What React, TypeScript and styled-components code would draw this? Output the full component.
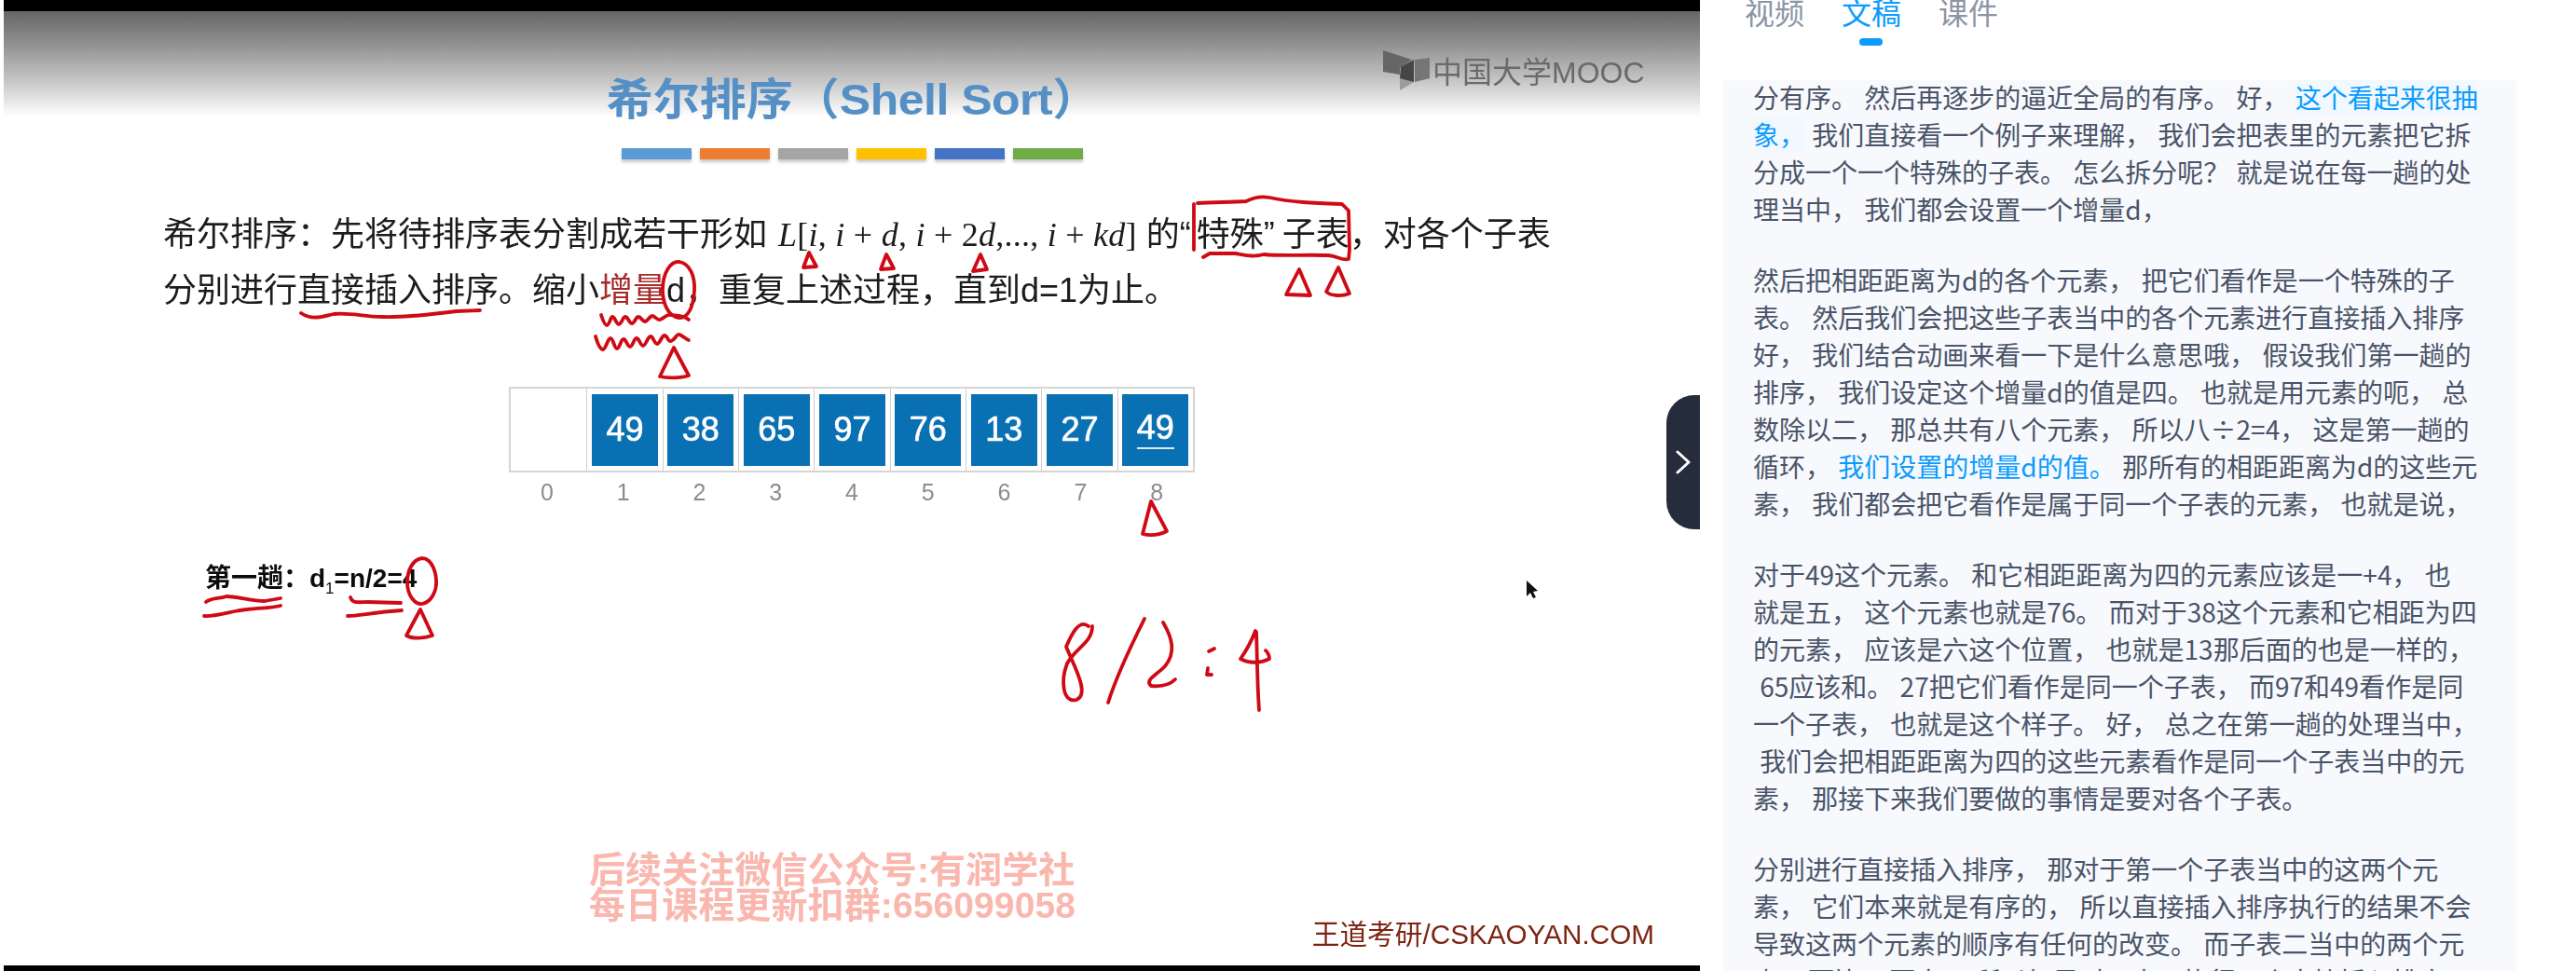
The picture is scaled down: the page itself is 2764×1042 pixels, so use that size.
import React from "react";
import styled, { createGlobalStyle } from "styled-components";

const GlobalStyle = createGlobalStyle`
  html, body { margin: 0; padding: 0; background: #ffffff; }
  body { font-family: "Noto Sans CJK SC", "Liberation Sans", sans-serif; overflow: hidden; }
`;

const Page = styled.div`
  display: flex;
  width: 2764px;
  height: 1042px;
  overflow: hidden;
  background: #fff;
`;

const Player = styled.section`
  position: relative;
  flex: 0 0 1820px;
  margin-left: 4px;
  height: 1042px;
  display: flex;
  flex-direction: column;
  background: #000;
  padding: 12px 0 6px;
  box-sizing: border-box;
`;

const Slide = styled.div`
  position: relative;
  flex: 1;
  display: flex;
  flex-direction: column;
  overflow: hidden;
  background: #fff;
  color: #111;
  font-family: "Liberation Sans", "Noto Sans CJK SC", sans-serif;
`;

const Blurred = styled.div`
  display: flex;
  flex-direction: column;
  flex: 1;
  filter: blur(0.6px);
`;

const SlideHead = styled.header`
  display: flex;
  flex-direction: column;
  align-items: center;
  height: 113px;
  background: linear-gradient(180deg, #666666 0%, #8f8f8f 30%, #c4c4c4 65%, #ffffff 100%);
  position: relative;
`;

const SlideTitle = styled.h1`
  margin: 60px 0 0 2px;
  font-size: 50px;
  line-height: 70px;
  font-weight: 700;
  color: #5490c6;
  white-space: nowrap;
  transform: scaleY(0.94);
`;

const TitleLatin = styled.span`
  letter-spacing: -0.5px;
`;

const MoocLogo = styled.div`
  position: absolute;
  left: 1480px;
  top: 40px;
  display: flex;
  align-items: center;
  gap: 1px;
  font-size: 32px;
  color: #6a6a6a;
  white-space: nowrap;
`;

const ColorBars = styled.div`
  display: flex;
  justify-content: center;
  gap: 9px;
  margin-top: 34px;
`;

const ColorBar = styled.span<{ $c: string }>`
  width: 75px;
  height: 12px;
  background: ${(p) => p.$c};
  box-shadow: 0 3px 3px rgba(0, 0, 0, 0.22);
`;

const Definition = styled.div`
  margin: 51px 0 0 171px;
  font-size: 36px;
  line-height: 60px;
  color: #1c1c1c;
  font-family: "Liberation Sans", "Noto Sans CJK SC", sans-serif;
`;

const DefLine = styled.div`
  white-space: nowrap;
`;

const MathText = styled.span`
  font-family: "Liberation Serif", serif;
  font-size: 36px;
  margin: 0 10px 0 12px;
  letter-spacing: 0.25px;
`;

const MathVar = styled.i`
  font-style: italic;
`;

const RedText = styled.span`
  color: #a82a2a;
`;

const Quote = styled.span<{ $gap: number }>`
  margin-right: ${(p) => p.$gap}px;
`;

const ArrayWrap = styled.div`
  margin: 73px 0 0 542px;
  width: 736px;
`;

const ArrayRow = styled.div`
  display: grid;
  grid-template-columns: repeat(9, 1fr);
  height: 92px;
  box-sizing: border-box;
  border: 2px solid #d5d5d5;
`;

const Cell = styled.div`
  display: flex;
  align-items: center;
  justify-content: center;
  border-left: 1px solid #cfcfcf;
  &:first-child { border-left: none; }
`;

const Tile = styled.div<{ $under?: boolean }>`
  width: 71px;
  height: 77px;
  display: flex;
  align-items: center;
  justify-content: center;
  background: #0a70b4;
  color: #fff;
  font-size: 36px;
  font-weight: 400;
  -webkit-text-stroke: 0.7px #fff;
  span {
    ${(p) => (p.$under ? "border-bottom: 2px solid #dfeaf3; padding-bottom: 3px; line-height: 36px;" : "")}
  }
`;

const IndexRow = styled.div`
  display: grid;
  grid-template-columns: repeat(9, 1fr);
  margin-top: 6px;
`;

const IndexLabel = styled.span`
  text-align: center;
  font-size: 25px;
  line-height: 30px;
  color: #8c8c8c;
`;

const PassLabel = styled.div`
  margin: 61px 0 0 216px;
  font-size: 28px;
  line-height: 34px;
  font-weight: 700;
  color: #0c0c0c;
  white-space: nowrap;
  sub { font-size: 17px; line-height: 0; font-weight: 400; }
`;

const Foot = styled.footer`
  margin-top: auto;
  display: flex;
  align-items: flex-end;
  padding: 0 49px 15px 628px;
  justify-content: space-between;
`;

const Watermark = styled.div`
  font-size: 39px;
  line-height: 38px;
  font-weight: 700;
  color: #fab7ae;
  white-space: nowrap;
  letter-spacing: 0.1px;
  margin-bottom: 30px;
`;

const Brand = styled.div`
  font-size: 29.7px;
  line-height: 36px;
  color: #7e2412;
  white-space: nowrap;
`;

const InkLayer = styled.svg`
  position: absolute;
  left: -4px;
  top: -12px;
  width: 1828px;
  height: 1042px;
  pointer-events: none;
  filter: blur(0.4px);
`;

const CollapseHandle = styled.button`
  position: absolute;
  right: 0;
  top: 424px;
  width: 36px;
  height: 144px;
  padding: 0;
  border: none;
  border-radius: 30px 0 0 30px;
  background: #252c3b;
  display: flex;
  align-items: center;
  justify-content: center;
`;

const Side = styled.aside`
  flex: 0 0 940px;
  display: flex;
  flex-direction: column;
  height: 1042px;
  overflow: hidden;
`;

const Tabs = styled.nav`
  display: flex;
  gap: 40px;
  height: 86px;
  padding-left: 48px;
  box-sizing: border-box;
  overflow: hidden;
  flex: none;
`;

const Tab = styled.div<{ $active?: boolean }>`
  position: relative;
  margin-top: -11px;
  font-size: 32px;
  line-height: 46px;
  height: 60px;
  color: ${(p) => (p.$active ? "#0a9bff" : "#8b95a6")};
  &::after {
    content: "";
    display: ${(p) => (p.$active ? "block" : "none")};
    position: absolute;
    left: 19px;
    top: 52px;
    width: 25px;
    height: 8px;
    border-radius: 4px;
    background: #0a9bff;
  }
`;

const Transcript = styled.div`
  margin-left: 24px;
  width: 852px;
  flex: 1;
  box-sizing: border-box;
  padding: 0 0 0 33px;
  background: #f7f9fd;
  overflow: hidden;
  color: #4a5468;
  font-size: 28px;
  line-height: 40px;
  word-spacing: 1px;
  font-family: "Noto Sans CJK SC", "Liberation Sans", sans-serif;
`;

const Para = styled.p`
  margin: 0 0 36px;
  &:first-child { margin-top: -2px; }
`;

const TLine = styled.div`
  white-space: pre;
`;

const Hl = styled.span<{ $tint?: boolean }>`
  color: #0a9bff;
  background: ${(p) => (p.$tint ? "#f1f8ff" : "transparent")};
`;

const bars = ["#5b9bd5", "#ed7d31", "#a5a5a5", "#ffc000", "#4472c4", "#70ad47"];
const values = ["", "49", "38", "65", "97", "76", "13", "27", "49"];

const Ink = styled.path`
  fill: none;
  stroke: #cf0a14;
  stroke-width: 3.8;
  stroke-linecap: round;
  stroke-linejoin: round;
`;

const inkPaths = [
  "M868 271 L862 287 L876 286 Z",
  "M951 273 L945 289 L959 288 Z",
  "M1052 273 L1044 291 L1059 289 Z",
  "M323 336 C335 344 345 340 358 337 C375 335 390 340 410 340 C440 341 470 336 490 334 L515 333",
  "M711 311 C711 292 720 280 729 281 C740 283 746 296 745 312 C744 330 738 342 728 341 C717 339 711 326 711 311",
  "M645 338 C647 344 649 349 651 349 C654 349 655 340 657 340 C660 340 661 348 664 348 C667 348 668 340 671 340 C674 340 675 347 678 347 C681 347 682 340 685 340 C688 340 689 345 692 345 C695 345 697 339 700 339 C703 339 705 344 708 343 C712 342 715 337 719 338 C723 339 732 337 739 343",
  "M639 361 C641 368 644 375 647 375 C650 375 652 363 655 363 C658 363 659 374 662 374 C665 374 666 364 669 364 C672 364 673 372 676 372 C679 372 680 363 683 363 C686 363 687 371 690 371 C693 371 695 361 698 361 C701 361 702 369 705 369 C708 369 710 360 713 360 C716 360 717 367 720 366 C724 365 726 358 729 359 C732 360 736 364 739 365",
  "M723 373 L708 404 C716 406 730 406 739 403 Z",
  "M1281 219 L1281 268",
  "M1285 218 C1300 217 1320 217 1337 216 C1345 212 1352 210 1362 212 C1385 217 1410 218 1440 219 L1447 226 L1448 268 L1447 278 C1440 280 1436 275 1425 274 C1400 273 1375 275 1356 273 C1345 276 1338 274 1325 272 L1298 272 L1291 276",
  "M1394 289 L1380 316 L1406 317 Z",
  "M1436 287 L1423 313 C1428 318 1440 318 1448 315 Z",
  "M1235 538 L1226 573 C1234 575 1244 574 1252 570 Z",
  "M453 599 C443 600 437 612 437 625 C437 640 446 649 453 648 C463 646 469 634 468 622 C467 609 461 599 453 599",
  "M451 654 L436 682 C443 686 455 685 464 682 Z",
  "M221 646 C228 641 234 643 243 640 C255 640 270 645 284 645 L301 642",
  "M219 661 C232 662 250 655 265 654 C278 652 290 653 301 650",
  "M376 641 C378 648 385 646 395 646 L430 647",
  "M373 661 C385 661 400 657 431 655",
  "M1168 672 C1158 664 1150 680 1144 694 C1152 714 1170 745 1155 751 C1140 755 1138 730 1145 712 C1154 695 1172 690 1172 672",
  "M1228 664 C1215 690 1198 725 1189 754",
  "M1248 668 C1258 685 1262 700 1250 715 C1240 725 1228 730 1235 736 C1245 737 1255 735 1261 729",
  "M1303 696 L1297 699 M1296 717 L1295 724 L1300 724",
  "M1347 677 C1342 690 1336 700 1331 707 C1340 712 1352 712 1362 707 C1362 702 1360 700 1358 698 M1348 678 C1349 705 1349 735 1351 762",
];

export default function App() {
  return (
    <Page>
      <GlobalStyle />
      <Player>
        <Slide>
          <Blurred>
            <SlideHead>
              <SlideTitle>希尔排序（<TitleLatin>Shell Sort</TitleLatin>）</SlideTitle>
              <MoocLogo>
                <svg width="52" height="46" viewBox="9 5 52 46" aria-hidden="true">
                  <path d="M9 7 L40 17 L27 26 L27 33 L9 30 Z" fill="#666666" />
                  <path d="M27 33 L42 41 L27 50 Z" fill="#9c9c9c" />
                  <path d="M42 17 L28 25 L27 37 L42 41 Z" fill="#464646" />
                  <path d="M43 17 L59 15 L59 37 L43 41 Z" fill="#767676" />
                </svg>
                <span>中国大学MOOC</span>
              </MoocLogo>
            </SlideHead>
            <ColorBars>
              {bars.map((c) => (
                <ColorBar key={c} $c={c} />
              ))}
            </ColorBars>
            <Definition>
              <DefLine>
                希尔排序：先将待排序表分割成若干形如
                <MathText>
                  <MathVar>L</MathVar>[<MathVar>i</MathVar>, <MathVar>i</MathVar> + <MathVar>d</MathVar>, <MathVar>i</MathVar> + 2<MathVar>d</MathVar>,..., <MathVar>i</MathVar> + <MathVar>kd</MathVar>]
                </MathText>
                的<Quote $gap={6}>“</Quote>特殊<Quote $gap={8}>”</Quote>子表，对各个子表
              </DefLine>
              <DefLine>
                分别进行直接插入排序。缩小<RedText>增量</RedText>d，重复上述过程，直到d=1为止。
              </DefLine>
            </Definition>
            <ArrayWrap>
              <ArrayRow>
                {values.map((v, i) => (
                  <Cell key={i}>
                    {v && (
                      <Tile $under={i === 8}>
                        <span>{v}</span>
                      </Tile>
                    )}
                  </Cell>
                ))}
              </ArrayRow>
              <IndexRow>
                {values.map((_, i) => (
                  <IndexLabel key={i}>{i}</IndexLabel>
                ))}
              </IndexRow>
            </ArrayWrap>
            <PassLabel>
              第一趟：d<sub>1</sub>=n/2=4
            </PassLabel>
            <Foot>
              <Watermark>
                后续关注微信公众号:有润学社
                <br />
                每日课程更新扣群:656099058
              </Watermark>
              <Brand>王道考研/CSKAOYAN.COM</Brand>
            </Foot>
          </Blurred>
          <InkLayer viewBox="0 0 1828 1042" aria-hidden="true">
            {inkPaths.map((d) => (
              <Ink key={d} d={d} />
            ))}
            <path d="M1638 623 L1638 640 L1642 636 L1645 642 L1648 641 L1645 635 L1650 634 Z" fill="#111" />
          </InkLayer>
        </Slide>
        <CollapseHandle aria-label="收起">
          <svg width="16" height="26" viewBox="0 0 16 26" aria-hidden="true">
            <path d="M2 2 L14 13 L2 24" fill="none" stroke="#fff" strokeWidth="3" strokeLinecap="round" strokeLinejoin="round" />
          </svg>
        </CollapseHandle>
      </Player>
      <Side>
        <Tabs>
          <Tab>视频</Tab>
          <Tab $active>文稿</Tab>
          <Tab>课件</Tab>
        </Tabs>
        <Transcript>
          <Para>
            <TLine>分有序。 然后再逐步的逼近全局的有序。 好， <Hl $tint>这个看起来很抽</Hl></TLine>
            <TLine><Hl $tint>象，</Hl> 我们直接看一个例子来理解， 我们会把表里的元素把它拆</TLine>
            <TLine>分成一个一个特殊的子表。 怎么拆分呢？ 就是说在每一趟的处</TLine>
            <TLine>理当中， 我们都会设置一个增量d，</TLine>
          </Para>
          <Para>
            <TLine>然后把相距距离为d的各个元素， 把它们看作是一个特殊的子</TLine>
            <TLine>表。 然后我们会把这些子表当中的各个元素进行直接插入排序</TLine>
            <TLine>好， 我们结合动画来看一下是什么意思哦， 假设我们第一趟的</TLine>
            <TLine>排序， 我们设定这个增量d的值是四。 也就是用元素的呃， 总</TLine>
            <TLine>数除以二， 那总共有八个元素， 所以八÷2=4， 这是第一趟的</TLine>
            <TLine>循环， <Hl>我们设置的增量d的值。</Hl> 那所有的相距距离为d的这些元</TLine>
            <TLine>素， 我们都会把它看作是属于同一个子表的元素， 也就是说，</TLine>
          </Para>
          <Para>
            <TLine>对于49这个元素。 和它相距距离为四的元素应该是一+4， 也</TLine>
            <TLine>就是五， 这个元素也就是76。 而对于38这个元素和它相距为四</TLine>
            <TLine>的元素， 应该是六这个位置， 也就是13那后面的也是一样的，</TLine>
            <TLine> 65应该和。 27把它们看作是同一个子表， 而97和49看作是同</TLine>
            <TLine>一个子表， 也就是这个样子。 好， 总之在第一趟的处理当中，</TLine>
            <TLine> 我们会把相距距离为四的这些元素看作是同一个子表当中的元</TLine>
            <TLine>素， 那接下来我们要做的事情是要对各个子表。</TLine>
          </Para>
          <Para>
            <TLine>分别进行直接插入排序， 那对于第一个子表当中的这两个元</TLine>
            <TLine>素， 它们本来就是有序的， 所以直接插入排序执行的结果不会</TLine>
            <TLine>导致这两个元素的顺序有任何的改变。 而子表二当中的两个元</TLine>
            <TLine>素38而比13更大， 所以如果对子表二执行一个直接插入排序</TLine>
          </Para>
        </Transcript>
      </Side>
    </Page>
  );
}
